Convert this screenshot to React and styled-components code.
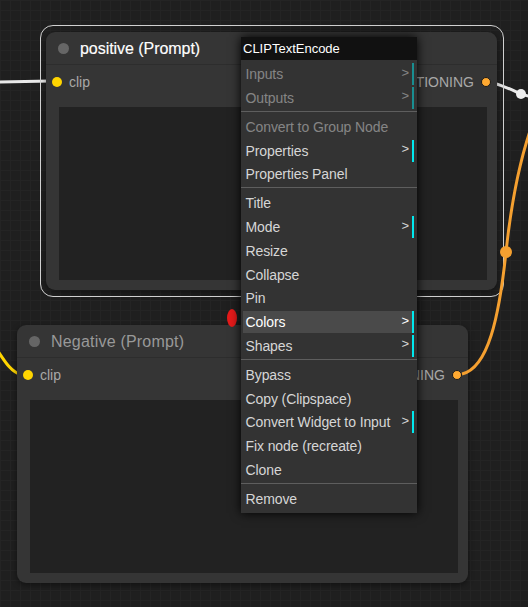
import React from "react";
import styled, { createGlobalStyle } from "styled-components";

const GlobalStyle = createGlobalStyle`
  html, body {
    margin: 0;
    padding: 0;
    background: #1f1f1f;
    overflow: hidden;
  }
`;

const menuEntries = [
  { label: "Inputs", sub: true, disabled: true },
  { label: "Outputs", sub: true, disabled: true },
  "sep",
  { label: "Convert to Group Node", disabled: true },
  { label: "Properties", sub: true },
  { label: "Properties Panel" },
  "sep",
  { label: "Title" },
  { label: "Mode", sub: true },
  { label: "Resize" },
  { label: "Collapse" },
  { label: "Pin" },
  { label: "Colors", sub: true, active: true },
  { label: "Shapes", sub: true },
  "sep",
  { label: "Bypass" },
  { label: "Copy (Clipspace)" },
  { label: "Convert Widget to Input", sub: true },
  { label: "Fix node (recreate)" },
  { label: "Clone" },
  "sep",
  { label: "Remove" },
];

function GraphNode({ x, y, title, selected, output }) {
  return (
    <Node $x={x} $y={y} $selected={selected}>
      <TitleBar>
        <TitleDot />
        <TitleText $selected={selected}>{title}</TitleText>
      </TitleBar>
      <SlotRow>
        <Slot>
          <SlotDot $color="#ffd500" />
          <SlotLabel>clip</SlotLabel>
        </Slot>
        <Slot>
          <SlotLabel>{output}</SlotLabel>
          <SlotDot $color="#ffa931" $ring />
        </Slot>
      </SlotRow>
      <TextArea />
    </Node>
  );
}

export default function App() {
  return (
    <>
      <GlobalStyle />
      <Canvas>
        <Wires width="528" height="607" viewBox="0 0 528 607">
          <path d="M -5 82 L 50 81" stroke="#e8e8e8" strokeWidth="3" fill="none" />
          <path d="M 490 82 C 505 86, 512 90, 521 94 L 535 98" stroke="#e8e8e8" strokeWidth="3" fill="none" />
          <circle cx="521" cy="94" r="5" fill="#eeeeee" />
          <path d="M -8 342 C 4 360, 10 372, 22 375" stroke="#ffd500" strokeWidth="3" fill="none" />
        </Wires>

        <GraphNode x={46} y={32} title="positive (Prompt)" selected output="CONDITIONING" />
        <GraphNode x={17} y={325} title="Negative (Prompt)" output="CONDITIONING" />

        <Wires width="528" height="607" viewBox="0 0 528 607">
          <path
            d="M 462 374 C 488 368, 499 318, 506 252 C 511 205, 518 165, 532 125"
            stroke="#f5a030"
            strokeWidth="3"
            fill="none"
          />
          <circle cx="506" cy="252" r="6" fill="#f5a030" />
        </Wires>

        <RedMark />

        <Menu>
          <MenuTitle>CLIPTextEncode</MenuTitle>
          {menuEntries.map((e, i) =>
            e === "sep" ? (
              <Separator key={i} />
            ) : (
              <MenuItem key={i} $sub={e.sub} $disabled={e.disabled} $active={e.active}>
                {e.label}
                {e.sub && <Arrow>&gt;</Arrow>}
              </MenuItem>
            )
          )}
        </Menu>
      </Canvas>
    </>
  );
}

const Canvas = styled.div`
  position: relative;
  width: 528px;
  height: 607px;
  overflow: hidden;
  background-color: #1f1f1f;
  background-image:
    linear-gradient(#242424 1px, transparent 1px),
    linear-gradient(90deg, #242424 1px, transparent 1px);
  background-size: 10px 10px;
  font-family: "Liberation Sans", Arial, sans-serif;
`;

const Wires = styled.svg`
  position: absolute;
  left: 0;
  top: 0;
  pointer-events: none;
`;

const Node = styled.div`
  position: absolute;
  left: ${(p) => p.$x}px;
  top: ${(p) => p.$y}px;
  width: 451px;
  height: 258px;
  box-sizing: border-box;
  background: #353535;
  border-radius: 9px;
  box-shadow: 0 2px 6px rgba(0, 0, 0, 0.45);
  display: flex;
  flex-direction: column;

  &::before {
    content: "";
    display: ${(p) => (p.$selected ? "block" : "none")};
    position: absolute;
    inset: -7px -7px -7px -6px;
    border: 1.5px solid #d0d0d0;
    border-radius: 13px;
    pointer-events: none;
  }
`;

const TitleBar = styled.div`
  height: 33px;
  flex: none;
  display: flex;
  align-items: center;
  border-bottom: 1px solid #2d2d2d;
  padding: 1px 0 0 12px;
  box-sizing: border-box;
`;

const TitleDot = styled.span`
  width: 11px;
  height: 11px;
  border-radius: 50%;
  background: #666;
`;

const TitleText = styled.span`
  margin-left: 11px;
  font-size: 16px;
  color: ${(p) => (p.$selected ? "#ffffff" : "#999999")};
  letter-spacing: ${(p) => (p.$selected ? "-0.05px" : "0.2px")};
  -webkit-text-stroke: ${(p) => (p.$selected ? "0.15px #fff" : "0")};
`;

const SlotRow = styled.div`
  height: 33px;
  flex: none;
  display: flex;
  justify-content: space-between;
  align-items: center;
  padding: 0 6px 0 6px;
`;

const Slot = styled.div`
  display: flex;
  align-items: center;
  gap: 7px;
`;

const SlotDot = styled.span`
  width: 10px;
  height: 10px;
  box-sizing: border-box;
  border-radius: 50%;
  background: ${(p) => p.$color};
  border: ${(p) => (p.$ring ? "1px solid #1a1a1a" : "none")};
`;

const SlotLabel = styled.span`
  font-size: 14px;
  color: #a8a8a8;
`;

const TextArea = styled.div`
  flex: 1;
  margin: 9px 10px 10px 13px;
  background: #222222;
`;

const RedMark = styled.span`
  position: absolute;
  left: 227px;
  top: 309px;
  width: 10px;
  height: 18px;
  border-radius: 50%;
  background: #e51a1a;
`;

const Menu = styled.div`
  position: absolute;
  left: 241px;
  top: 37px;
  width: 176px;
  background: #333333;
  box-shadow: 0 0 10px #000;
  display: flex;
  flex-direction: column;
  gap: 1.75px;
  padding-bottom: 3px;
  font-family: "Liberation Sans", Arial, sans-serif;
`;

const MenuTitle = styled.div`
  height: 23px;
  line-height: 23px;
  background: #111111;
  color: #ffffff;
  font-size: 13px;
  padding-left: 2px;
  margin-bottom: 1.25px;
`;

const MenuItem = styled.div`
  height: 22px;
  display: flex;
  align-items: center;
  margin: 0 3px 0 2px;
  padding-left: 2.5px;
  font-size: 14px;
  letter-spacing: -0.1px;
  color: ${(p) => (p.$active ? "#ffffff" : "#d6d6d6")};
  background: ${(p) => (p.$active ? "#4a4a4a" : "transparent")};
  border-right: 2px solid ${(p) => (p.$sub ? "#00e8ee" : "transparent")};
  opacity: ${(p) => (p.$disabled ? 0.5 : 1)};
  white-space: nowrap;
`;

const Arrow = styled.span`
  margin-left: auto;
  margin-right: 3px;
  font-size: 13px;
  position: relative;
  top: -2px;
`;

const Separator = styled.div`
  height: 3.5px;
  box-sizing: border-box;
  border-top: 1px solid #5e5e5e;
`;
